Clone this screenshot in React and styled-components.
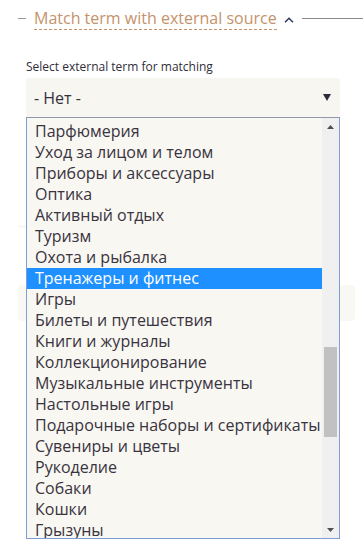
import React from "react";
import styled, { createGlobalStyle } from "styled-components";

const GlobalStyle = createGlobalStyle`
  html, body { margin: 0; padding: 0; background: #ffffff; }
  body { font-family: "Open Sans", "Noto Sans", sans-serif; }
`;

const Page = styled.div`
  position: relative;
  width: 363px;
  height: 548px;
  overflow: hidden;
`;

const Header = styled.div`
  display: flex;
  align-items: center;
  padding-top: 7px;
  padding-left: 18px;
`;

const Dash = styled.span`
  width: 8px;
  height: 1px;
  background: #9a9a9a;
  margin-right: 8px;
`;

const Title = styled.span`
  font-size: 16px;
  line-height: 22px;
  color: #c4936b;
  border-bottom: 1px dashed #c4936b;
  white-space: nowrap;
`;

const Chevron = styled.svg`
  width: 10px;
  height: 6px;
  margin-left: 7px;
  margin-top: 2px;
`;

const Rule = styled.span`
  flex: 1;
  height: 1px;
  background: #8a8a8a;
  margin-left: 8px;
`;

const Field = styled.div`
  padding-left: 26px;
  margin-top: 29px;
`;

const Label = styled.div`
  font-size: 12px;
  line-height: 16px;
  color: #2f2d3a;
  margin-bottom: 3px;
`;

const SelectWrap = styled.div`
  position: relative;
  width: 314px;
`;

const Select = styled.div`
  height: 39px;
  box-sizing: border-box;
  background: #f7f6f1;
  border-radius: 3px 3px 0 0;
  display: flex;
  align-items: center;
  justify-content: space-between;
  padding: 0 9px 0 8px;
  font-size: 16px;
  color: #34303c;
`;

const Arrow = styled.svg`
  width: 8px;
  height: 7px;
`;

const Under = styled.div`
  padding-left: 18px;
`;

const GhostBar = styled.div`
  margin-top: 108px;
  width: 300px;
  height: 3px;
  background: #f9f8f3;
`;

const GhostBox = styled.div`
  margin-top: 57px;
  width: 337px;
  height: 36px;
  background: #f9f8f3;
  border-radius: 4px;
`;

const List = styled.div`
  position: absolute;
  left: 0;
  top: 100%;
  width: 314px;
  height: 422px;
  box-sizing: border-box;
  border: 1px solid #7d9ed6;
  border-top-color: #8e97ab;
  background: #f8f7f2;
  display: flex;
  overflow: hidden;
  z-index: 2;
`;

const Items = styled.div`
  flex: 1;
  min-width: 0;
  padding-top: 3px;
`;

const Item = styled.div`
  height: 21px;
  line-height: 21px;
  padding-left: 8px;
  font-size: 16px;
  white-space: nowrap;
  color: ${(p) => (p.$selected ? "#ffffff" : "#3a3340")};
  background: ${(p) => (p.$selected ? "#1e90ff" : "transparent")};
`;

const Scrollbar = styled.div`
  width: 17px;
  flex: none;
  background: #f0f0f0;
  display: flex;
  flex-direction: column;
`;

const ScrollBtn = styled.div`
  height: 17px;
  display: flex;
  align-items: center;
  justify-content: center;
`;

const Track = styled.div`
  flex: 1;
`;

const Thumb = styled.div`
  margin-left: 2px;
  width: 13px;
  background: #c1c1c1;
`;

const items = [
  "Парфюмерия",
  "Уход за лицом и телом",
  "Приборы и аксессуары",
  "Оптика",
  "Активный отдых",
  "Туризм",
  "Охота и рыбалка",
  "Тренажеры и фитнес",
  "Игры",
  "Билеты и путешествия",
  "Книги и журналы",
  "Коллекционирование",
  "Музыкальные инструменты",
  "Настольные игры",
  "Подарочные наборы и сертификаты",
  "Сувениры и цветы",
  "Рукоделие",
  "Собаки",
  "Кошки",
  "Грызуны",
];

export default function App() {
  const thumbTop = 212;
  const thumbHeight = 90;
  return (
    <Page>
      <GlobalStyle />
      <Header>
        <Dash />
        <Title>Match term with external source</Title>
        <Chevron viewBox="0 0 10 6">
          <path d="M1 5.2 L5 1.2 L9 5.2" fill="none" stroke="#2c3858" strokeWidth="1.5" />
        </Chevron>
        <Rule />
      </Header>
      <Field>
        <Label>Select external term for matching</Label>
        <SelectWrap>
          <Select>
            <span>- Нет -</span>
            <Arrow viewBox="0 0 8 7">
              <path d="M0 0 H8 L4 7 Z" fill="#2e2c38" />
            </Arrow>
          </Select>
          <List>
            <Items>
              {items.map((t) => (
                <Item key={t} $selected={t === "Тренажеры и фитнес"}>
                  {t}
                </Item>
              ))}
            </Items>
            <Scrollbar>
              <ScrollBtn>
                <svg width="7" height="4" viewBox="0 0 7 4">
                  <path d="M0 4 L3.5 0 L7 4 Z" fill="#505050" />
                </svg>
              </ScrollBtn>
              <Track>
                <Thumb style={{ marginTop: thumbTop, height: thumbHeight }} />
              </Track>
              <ScrollBtn>
                <svg width="7" height="4" viewBox="0 0 7 4">
                  <path d="M0 0 L3.5 4 L7 0 Z" fill="#505050" />
                </svg>
              </ScrollBtn>
            </Scrollbar>
          </List>
        </SelectWrap>
      </Field>
      <Under>
        <GhostBar />
        <GhostBox />
      </Under>
    </Page>
  );
}
